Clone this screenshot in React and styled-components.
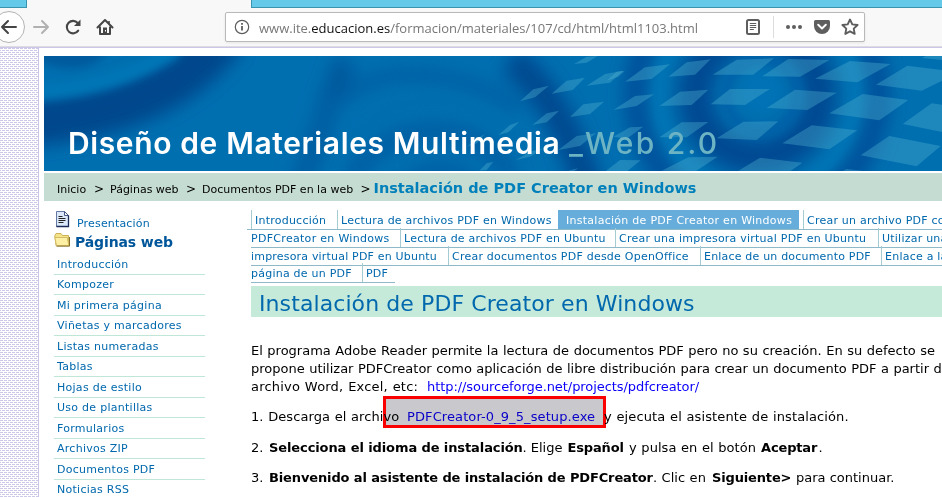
import React from "react";
import styled, { createGlobalStyle, css } from "styled-components";

const Global = createGlobalStyle`
  * { box-sizing: border-box; }
  html, body { margin: 0; padding: 0; overflow: hidden; background: #fff; }
  body { font-family: "DejaVu Sans", Verdana, sans-serif; color: #000; }
`;

const Window = styled.div`
  width: 942px; height: 497px; overflow: hidden;
  display: flex; flex-direction: column;
`;

/* ---------- browser chrome ---------- */
const TabStrip = styled.div`
  flex: none; height: 8px; display: grid; grid-template-columns: 27px 224px 1fr;
  background: #f8f8f8;
`;
const StripSide = styled.div`
  background: #65c9e9; border-bottom: 1px solid #3b94ae;
  ${(p) => (p.$right ? css`border-left: 1px solid #3b94ae;` : css`border-right: 1px solid #3b94ae;`)}
`;
const Toolbar = styled.div`
  flex: none; height: 39px; display: flex; align-items: flex-start; padding-top: 3px;
  background: #f8f8f8; border-bottom: 1px solid #dddce0;
`;
const BackButton = styled.div`
  flex: none; width: 32px; height: 32px; margin-left: -7px; border: 1px solid #b4b4b4; border-radius: 50%;
  background: #fff; display: flex; align-items: center; justify-content: center;
`;
const ToolIcon = styled.div`
  flex: none; width: 18px; height: 32px; margin-left: ${(p) => p.$gap}px;
  display: flex; align-items: center; justify-content: center;
`;
const UrlBar = styled.div`
  flex: none; width: 640px; height: 30px; margin: 1px 0 0 111px; padding-left: 7px;
  display: flex; align-items: center; background: #fff;
  border: 1px solid #b9b9b9; border-radius: 2px; box-shadow: 0 1px 3px rgba(0,0,0,.08);
`;
const Address = styled.div`
  width: 486px; margin-left: 8px; padding-top: 1px; white-space: pre;
  font: 13px/20px "Open Sans", "Noto Sans", sans-serif; color: #777;
  b { font-weight: 400; color: #111; }
`;
const UrlIcon = styled.div`
  flex: none; width: 18px; height: 28px; margin-left: ${(p) => p.$gap || 0}px;
  display: flex; align-items: center; justify-content: center;
`;
const Divider = styled.div`
  width: 1px; height: 22px; background: #dcdcdc; margin-left: 11px;
`;

/* ---------- web page ---------- */
const Page = styled.div`
  flex: 1; min-height: 0; display: flex; border-top: 1px solid #cbc7e6;
`;
const Gutter = styled.div`
  flex: none; width: 39px; border-right: 1px solid #c9c5e6;
  background-color: #fff;
  background-image: conic-gradient(at 3px 1px, transparent 75%, #ccc9e8 0), conic-gradient(at 3px 1px, transparent 75%, #ccc9e8 0);
  background-size: 4px 4px;
  background-position: 0 0, 2px 2px;
`;
const Sheet = styled.div`
  flex: 1; min-width: 0; padding: 8px 0 0 5px; display: flex; flex-direction: column;
`;
const Banner = styled.header`
  position: relative; flex: none; height: 115px; overflow: hidden; background: #006fb0;
  display: flex; align-items: flex-end; padding: 0 0 10px 24px;
`;
const BannerArt = styled.svg`
  position: absolute; left: 0; top: 0; width: 898px; height: 115px;
`;
const BannerTitle = styled.div`
  position: relative; width: 501px; white-space: pre;
  font: 600 30px/36px Inter, sans-serif; letter-spacing: .62px; color: #fff;
`;
const BannerSuffix = styled(BannerTitle)`
  width: auto; font-weight: 500; letter-spacing: 2.2px; color: #6cb4c4;
`;
const Crumbs = styled.nav`
  flex: none; height: 28px; margin-top: 2px; padding-left: 13px; background: #c5dcd2;
  display: flex; align-items: baseline; white-space: pre; font-size: 11px; line-height: 31px;
`;
const Crumb = styled.span` width: ${(p) => p.$w}px; `;
const CrumbArrow = styled.span` width: ${(p) => p.$w}px; font-size: 12px; line-height: 20px; `;
const CrumbHere = styled.span` font-size: 14.5px; font-weight: 700; color: #0080bb; `;

const Columns = styled.div` flex: 1; min-height: 0; display: flex; `;
const Sidebar = styled.aside`
  flex: none; width: 203px; padding: 9px 0 0 10px;
`;
const SideHead = styled.div`
  display: flex; align-items: flex-start; height: ${(p) => p.$h}px; white-space: pre;
`;
const SideIcon = styled.div` width: ${(p) => p.$w}px; height: 16px; svg { display: block; } `;
const SideLink = styled.span`
  font-size: 11px; line-height: 14px; letter-spacing: .17px; padding-top: 7px; color: #0068ad;
`;
const SideTitle = styled.span`
  font-size: 14px; font-weight: 700; line-height: 20px; color: #00569a; letter-spacing: -.12px;
`;
const Menu = styled.div` width: 151px; `;
const MenuItem = styled.div`
  height: 20.5px; padding: 3.8px 0 0 3px; border-bottom: 1px solid #bfe6d6;
  font-size: 11px; line-height: 14px; letter-spacing: .27px; color: #0068ad; white-space: nowrap;
`;

const Main = styled.main` flex: none; width: 691px; padding-top: 8px; margin-left: 4px; `;
const Tabs = styled.div`
  display: flex; align-items: flex-end; height: ${(p) => p.$h}px; white-space: nowrap;
  width: ${(p) => (p.$w ? p.$w + "px" : "auto")}; margin-left: ${(p) => (p.$out ? "-4px" : 0)};
  padding-left: ${(p) => (p.$out ? 4 : 0)}px;
  border-bottom: 1px solid #8db9c9;
`;
const Tab = styled.div`
  flex: none; width: ${(p) => p.$w}px; height: 19px; margin-top: -1px; padding-left: ${(p) => (p.$first ? 0 : 3)}px;
  border-left: ${(p) => (p.$first ? "0" : "1px solid #a5ccd3")};
  font-size: 11px; line-height: 21px; letter-spacing: ${(p) => p.$ls ?? 0.23}px; color: #0068ad;
  ${(p) => p.$active && css`
    color: #fff; background: #66addb; border-left-color: #66addb; margin-left: -4px; padding-left: 7px; margin-right: 4px;
  `}
`;
const Heading = styled.h1`
  margin: 3px 0 0; height: 31px; padding-left: 8px; background: #c6eada;
  font-size: 22px; font-weight: 400; line-height: 35px; letter-spacing: .09px; color: #0068ad; white-space: nowrap;
`;
const Intro = styled.div` margin-top: 25px; `;
const Line = styled.p`
  margin: 0 0 ${(p) => p.$gap || 0}px; height: 18px; line-height: 18px; font-size: 13px; white-space: pre;
  position: relative; display: flex;
`;
const Run = styled.span`
  flex: none; ${(p) => p.$w && css`width: ${p.$w}px;`}
  letter-spacing: ${(p) => p.$ls || 0}px; word-spacing: ${(p) => p.$ws || 0}px;
  font-weight: ${(p) => (p.$bold ? 700 : 400)};
`;
const Link = styled(Run)` color: #0a00fa; `;
const Highlight = styled.div`
  position: absolute; left: 132px; top: -12px; width: 223px; height: 32px;
  border: 3px solid #fa0000; background: #c9c8cd; mix-blend-mode: multiply;
`;

const QUADS_MID = [
  "822,42 860,20 893,18 860,38", "860,107 915,72 970,62 930,98", "755,131 800,92 855,83 818,120",
  "660,154 700,118 747,107 705,142", "810,201 850,163 912,155 870,192", "697,225 740,190 778,182 740,217",
  "595,255 630,225 658,215 625,247", "775,300 830,258 888,250 840,288", "500,290 540,260 555,252 530,280",
  "648,330 690,305 730,295 690,320", "538,362 560,340 580,335 560,360", "800,365 812,360 835,355 820,365",
  "915,365 960,330 1022,331 980,365",
];
const QUADS_RIGHT = [
  "15,95 75,52 150,43 95,87", "-40,92 -10,65 15,62 -5,80", "145,80 200,37 272,28 225,74", "278,74 350,29 462,25 400,74",
  "427,79 505,27 628,30 540,80", "585,86 690,33 812,42 712,97", "768,104 862,47 980,62 980,85 905,122",
  "905,24 920,17 970,17 970,30", "-20,180 45,138 103,133 50,168", "118,168 180,125 265,119 215,165",
  "272,163 330,117 450,117 375,165", "440,174 525,119 650,128 562,180", "628,190 728,132 865,150 778,211",
  "848,222 935,160 970,165 970,247", "-20,260 30,232 70,230 20,266", "118,262 185,217 265,216 200,262",
  "290,265 370,215 475,214 410,270", "487,280 575,226 712,241 628,298", "722,316 808,258 962,288 890,349",
  "125,362 205,322 293,320 225,365", "355,362 420,323 547,338 505,368", "660,367 680,357 740,364",
];

const BannerDrawing = () => (
  <BannerArt viewBox="44 56 898 115">
    <defs>
      <filter id="soft" x="-30%" y="-60%" width="160%" height="220%"><feGaussianBlur stdDeviation="9" /></filter>
      <filter id="fine" x="-30%" y="-60%" width="160%" height="220%"><feGaussianBlur stdDeviation="4.5" /></filter>
    </defs>
    <g fill="none" filter="url(#soft)">
      <path d="M225 30 Q170 112 20 122" stroke="#00468c" strokeWidth="50" />
      <path d="M345 60 L298 190" stroke="#005499" strokeWidth="20" />
      <path d="M300 190 Q310 85 400 75 Q470 72 520 110" stroke="#005fa3" strokeWidth="14" />
      <path d="M510 60 Q555 90 590 190" stroke="#004a90" strokeWidth="30" />
      <path d="M350 180 Q380 130 440 132 Q500 138 510 180" stroke="#005da2" strokeWidth="18" />
      <path d="M400 190 Q440 150 480 190" stroke="#005ca1" strokeWidth="14" />
      <circle cx="757" cy="95" r="122" stroke="#00509a" strokeWidth="22" />
      <circle cx="757" cy="95" r="62" stroke="#004a92" strokeWidth="34" />
    </g>
    <g fill="none" filter="url(#fine)">
      <path d="M28 48 Q80 72 102 46" stroke="#005a9c" strokeWidth="18" />
      <path d="M34 92 Q120 86 176 48" stroke="#0076b6" strokeWidth="18" />
      <circle cx="757" cy="95" r="98" stroke="#0074b6" strokeWidth="12" />
      <circle cx="762" cy="95" r="36" stroke="#0061a8" strokeWidth="9" />
      <circle cx="762" cy="92" r="20" fill="#0072b5" />
      <path d="M350 150 Q370 104 430 102 Q500 102 524 160" stroke="#006dae" strokeWidth="10" />
    </g>
    <g fill="#4fb0d0" fillOpacity=".38">
      <g transform="translate(300 50) scale(.33333)">{QUADS_MID.map((q) => <polygon key={q} points={q} />)}</g>
      <g transform="translate(620 50) scale(.33333)">{QUADS_RIGHT.map((q) => <polygon key={q} points={q} />)}</g>
    </g>
  </BannerArt>
);

const Arrow = ({ right, color }) => (
  <svg width="18" height="18" viewBox="0 0 18 18" fill="none" stroke={color} strokeWidth="2" strokeLinecap="round" strokeLinejoin="round">
    {right ? <path d="M2 9H16M10 3l6 6-6 6" /> : <path d="M16 9H2M8 3L2 9l6 6" />}
  </svg>
);

const MENU = ["Introducción", "Kompozer", "Mi primera página", "Viñetas y marcadores", "Listas numeradas", "Tablas",
  "Hojas de estilo", "Uso de plantillas", "Formularios", "Archivos ZIP", "Documentos PDF", "Noticias RSS"];

export default function App() {
  return (
    <Window>
      <Global />
      <TabStrip><StripSide /><span /><StripSide $right /></TabStrip>
      <Toolbar>
        <BackButton><Arrow color="#454545" /></BackButton>
        <ToolIcon $gap={7}><Arrow right color="#b1b1b1" /></ToolIcon>
        <ToolIcon $gap={14}>
          <svg width="18" height="18" viewBox="0 0 18 18" fill="none" stroke="#454545" strokeWidth="2.1">
            <path d="M14.2 12.6A6.2 6.2 0 1 1 13.7 5" strokeLinecap="round" />
            <path d="M16.5 1.5V8H10z" fill="#454545" stroke="none" />
          </svg>
        </ToolIcon>
        <ToolIcon $gap={14}>
          <svg width="18" height="18" viewBox="0 0 18 18" fill="none" stroke="#454545" strokeWidth="2" strokeLinejoin="round">
            <path d="M1.5 9.5L9 2l7.5 7.5" strokeLinecap="round" />
            <path d="M4 8.5V16H14V8.5" />
            <path d="M7 9.5h4V16H7z" fill="#454545" stroke="none" />
            <path d="M9.5 12v1.5" stroke="#fff" strokeWidth="1" />
            <path d="M13 3v3" strokeWidth="1.6" />
          </svg>
        </ToolIcon>
        <UrlBar>
          <UrlIcon>
            <svg width="16" height="16" viewBox="0 0 16 16" fill="none" stroke="#5c5c5c">
              <circle cx="8" cy="8" r="6.7" strokeWidth="1.2" />
              <path d="M8 7v4.6M8 4v1.7" strokeWidth="1.8" />
            </svg>
          </UrlIcon>
          <Address>www.ite.<b>educacion.es</b>/formacion/materiales/107/cd/html/html1103.html</Address>
          <UrlIcon $gap={-1}>
            <svg width="16" height="18" viewBox="0 0 16 18" fill="none" stroke="#5e5e5e">
              <rect x="2" y="2" width="12" height="14" rx="1.5" strokeWidth="2" />
              <path d="M4.8 5.5h6.4M4.8 7.5h6.4M4.8 9.5h6.4M4.8 11.5h4" strokeWidth="1" />
            </svg>
          </UrlIcon>
          <Divider />
          <UrlIcon $gap={11}>
            <svg width="18" height="6" viewBox="0 0 18 6" fill="#5e5e5e"><circle cx="3" cy="3" r="2" /><circle cx="9" cy="3" r="2" /><circle cx="15" cy="3" r="2" /></svg>
          </UrlIcon>
          <UrlIcon $gap={10}>
            <svg width="18" height="18" viewBox="0 0 18 18">
              <path d="M1 3.5Q1 2 2.5 2h13Q17 2 17 3.5V8A8 8 0 0 1 1 8z" fill="#5e5e5e" />
              <path d="M5.2 6.8L9 10.4l3.8-3.6" fill="none" stroke="#fff" strokeWidth="2" strokeLinecap="round" strokeLinejoin="round" />
            </svg>
          </UrlIcon>
          <UrlIcon $gap={10}>
            <svg width="18" height="18" viewBox="0 0 18 18" fill="none" stroke="#5e5e5e" strokeWidth="1.9" strokeLinejoin="round">
              <path d="M9 1.5l2.3 4.9 5.3.6-3.9 3.6 1 5.3L9 13.3l-4.7 2.6 1-5.3L1.4 7l5.3-.6z" />
            </svg>
          </UrlIcon>
        </UrlBar>
      </Toolbar>

      <Page>
        <Gutter />
        <Sheet>
          <Banner>
            <BannerDrawing />
            <BannerTitle>Diseño de Materiales Multimedia</BannerTitle>
            <BannerSuffix>_Web 2.0</BannerSuffix>
          </Banner>
          <Crumbs>
            <Crumb $w={37}>Inicio</Crumb><CrumbArrow $w={16}>&gt;</CrumbArrow>
            <Crumb $w={76}>Páginas web</Crumb><CrumbArrow $w={16}>&gt;</CrumbArrow>
            <Crumb $w={158.5}>Documentos PDF en la web</Crumb><CrumbArrow $w={13}>&gt;</CrumbArrow>
            <CrumbHere>Instalación de PDF Creator en Windows</CrumbHere>
          </Crumbs>
          <Columns>
            <Sidebar>
              <SideHead $h={22}>
                <SideIcon $w={23}>
                  <svg width="17" height="18" viewBox="0 0 17 18">
                    <path d="M2.5 1.5h8l4 4v11h-12z" fill="#dbe9fb" stroke="#6478a6" />
                    <path d="M10.5 1.5v4h4z" fill="#fff" stroke="#465a86" />
                    <path d="M14.5 5.5v11h-12" fill="none" stroke="#1b2c58" strokeWidth="1.3" />
                    <path d="M4.5 6.5h4M4.5 8.5h7M4.5 10.5h7M4.5 12.5h5" stroke="#222" />
                  </svg>
                </SideIcon>
                <SideLink>Presentación</SideLink>
              </SideHead>
              <SideHead $h={22.2}>
                <SideIcon $w={21}>
                  <svg width="17" height="16" viewBox="0 0 17 16">
                    <path d="M.8 3.5L2 1.5h5l1.5 2h6v10H2z" fill="#f5e389" stroke="#c9b158" />
                    <path d="M.8 5.5h12.5l1.5 8H2.5z" fill="#fdf0a4" stroke="#d3bc62" />
                    <path d="M2.5 14.2h13V5" fill="none" stroke="#86712a" />
                  </svg>
                </SideIcon>
                <SideTitle>Páginas web</SideTitle>
              </SideHead>
              <Menu>{MENU.map((m) => <MenuItem key={m}>{m}</MenuItem>)}</Menu>
            </Sidebar>
            <Main>
              <Tabs $h={21} $out>
                <Tab $w={86}>Introducción</Tab>
                <Tab $w={225}>Lectura de archivos PDF en Windows</Tab>
                <Tab $w={241} $active $ls={0.27}>Instalación de PDF Creator en Windows</Tab>
                <Tab $w={200}>Crear un archivo PDF con</Tab>
              </Tabs>
              <Tabs $h={18}>
                <Tab $w={149} $first $ls={0.3}>PDFCreator en Windows</Tab>
                <Tab $w={215}>Lectura de archivos PDF en Ubuntu</Tab>
                <Tab $w={263}>Crear una impresora virtual PDF en Ubuntu</Tab>
                <Tab $w={120}>Utilizar una</Tab>
              </Tabs>
              <Tabs $h={18}>
                <Tab $w={197} $first $ls={0.19}>impresora virtual PDF en Ubuntu</Tab>
                <Tab $w={252}>Crear documentos PDF desde OpenOffice</Tab>
                <Tab $w={181} $ls={0.19}>Enlace de un documento PDF</Tab>
                <Tab $w={120}>Enlace a la</Tab>
              </Tabs>
              <Tabs $h={17} $w={144}>
                <Tab $w={111} $first>página de un PDF</Tab>
                <Tab $w={33}>PDF</Tab>
              </Tabs>
              <Heading>Instalación de PDF Creator en Windows</Heading>
              <Intro>
                <Line><Run $ws={0.4}>El programa Adobe Reader permite la lectura de documentos PDF pero no su creación. En su defecto se</Run></Line>
                <Line><Run $ws={0.3}>propone utilizar PDFCreator como aplicación de libre distribución para crear un documento PDF a partir de</Run></Line>
                <Line $gap={12}><Run $w={176} $ls={0.2} $ws={0.43}>archivo Word, Excel, etc:</Run><Link $ls={-0.07}>http://sourceforge.net/projects/pdfcreator/</Link></Line>
              </Intro>
              <Line $gap={13}>
                <Run $w={156} $ls={0.1} $ws={0.3}>1. Descarga el archivo</Run>
                <Link $w={197} $ls={0.1}>PDFCreator-0_9_5_setup.exe</Link>
                <Run $ls={0.12} $ws={0.4}>y ejecuta el asistente de instalación.</Run>
                <Highlight />
              </Line>
              <Line $gap={12}>
                <Run $w={18}>2.</Run>
                <Run $w={253.5} $ls={-0.1} $bold>Selecciona el idioma de instalación</Run>
                <Run $w={45}>. Elige</Run>
                <Run $w={61.5} $ls={-0.15} $bold>Español</Run>
                <Run $w={132} $ls={0.05} $ws={0.4}>y pulsa en el botón</Run>
                <Run $w={57.5} $ls={-0.15} $bold>Aceptar</Run>
                <Run>.</Run>
              </Line>
              <Line>
                <Run $w={18}>3.</Run>
                <Run $w={384} $ls={-0.13} $bold>Bienvenido al asistente de instalación de PDFCreator</Run>
                <Run $w={59} $ls={0.1}>. Clic en</Run>
                <Run $w={84} $ls={-0.15} $bold>Siguiente&gt;</Run>
                <Run>para continuar.</Run>
              </Line>
            </Main>
          </Columns>
        </Sheet>
      </Page>
    </Window>
  );
}
